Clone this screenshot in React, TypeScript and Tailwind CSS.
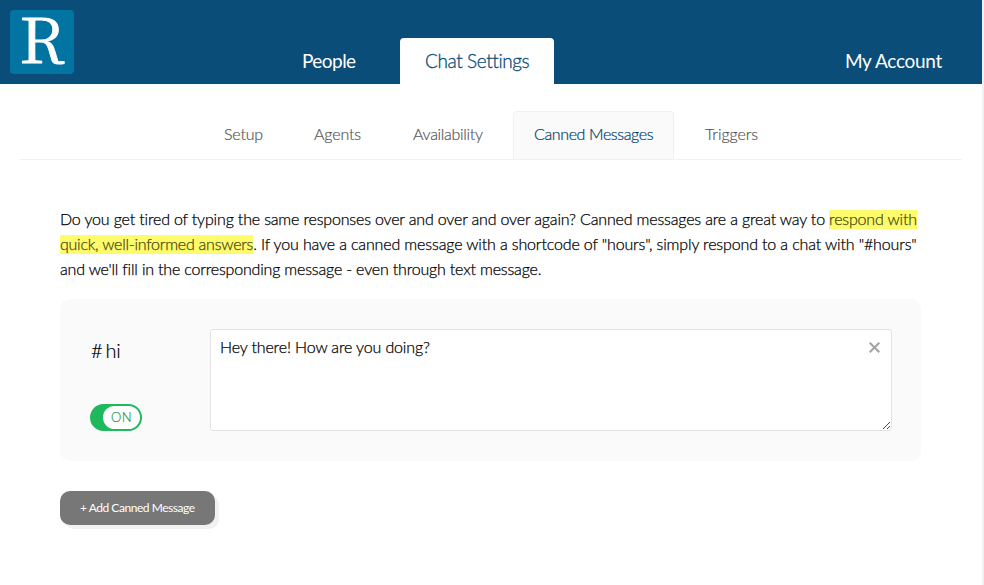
import type { ReactNode } from "react";

function TopNav() {
  return (
    <header className="flex h-[84px] items-start bg-[#0a4d78] text-[19px] leading-[46px] text-white">
      <div className="mt-[10px] ml-[10px] flex h-16 w-16 justify-center rounded bg-[#0274a2]">
        <span className="block origin-center scale-x-[1.04] font-['Noto_Serif_CJK_SC'] text-[62px] leading-[54px] font-normal [-webkit-text-stroke:0.9px_white]">
          R
        </span>
      </div>
      <nav className="mt-[38px] ml-[228px] flex">
        <a className="w-[98px] tracking-[-0.55px]">People</a>
        <a className="h-[46px] w-[154px] rounded-t bg-white pl-[25px] font-light tracking-[-0.4px] text-[#0a4d78] [-webkit-text-stroke:0.3px_#0a4d78]">
          Chat Settings
        </a>
      </nav>
      <a className="mt-[38px] mr-[40px] ml-auto tracking-[-0.3px]">My Account</a>
    </header>
  );
}

function SubNav() {
  return (
    <nav className="mx-5 mt-[27px] flex h-[49px] border-b border-[#f1f1f1] pl-[204px] text-[16px] leading-[46px] font-light text-[#555] [-webkit-text-stroke:0.2px]">
      <a className="w-[90px] tracking-[-0.2px]">Setup</a>
      <a className="w-[99px] tracking-[-0.15px]">Agents</a>
      <a className="w-[100px] tracking-[-0.3px]">Availability</a>
      <a className="h-12 w-[161px] rounded-t border border-b-0 border-[#f1f1f1] bg-[#fafafa] pl-5 leading-[44px] tracking-[-0.38px] text-[#003a68]">
        Canned Messages
      </a>
      <a className="ml-[31px] tracking-[-0.05px]">Triggers</a>
    </nav>
  );
}

function Mark({ children }: { children: ReactNode }) {
  return <mark className="inline-block bg-[#fffc6b] pb-[2px] leading-[17px] text-[#4a4816]">{children}</mark>;
}

function Intro() {
  return (
    <div className="mt-[46px] text-[16px] leading-[25px] font-light whitespace-nowrap text-black [-webkit-text-stroke:0.25px]">
      <p className="h-[25px]">
        <span className="tracking-[-0.165px]">
          Do you get tired of typing the same responses over and over and over again? Canned messages are a great way
          to{" "}
        </span>
        <span className="tracking-[-0.175px]">
          <Mark>respond with</Mark>
        </span>
      </p>
      <p className="h-[25px]">
        <span className="tracking-[-0.24px]">
          <Mark>quick, well-informed answers</Mark>
        </span>
        <span className="tracking-[-0.14px]">
          . If you have a canned message with a shortcode of "hours", simply respond to a chat with "#hours"
        </span>
      </p>
      <p className="h-[25px] tracking-[-0.18px]">
        and we'll fill in the corresponding message - even through text message.
      </p>
    </div>
  );
}

function CannedMessage() {
  return (
    <section className="mt-[18px] flex h-[162px] w-[861px] rounded-[10px] bg-[#fafafa] pt-[30px] pl-[30px]">
      <div className="w-[120px]">
        <div className="flex gap-[3px] pt-[8px] pl-px text-[20px] leading-[26px] font-light text-black [-webkit-text-stroke:0.2px]">
          <span>#</span>
          <span className="tracking-[-0.3px]">hi</span>
        </div>
        <div className="mt-[41px] flex h-[27px] w-[52px] justify-end rounded-full bg-[#1fb85c] p-[2px]">
          <span className="h-[23px] w-[37px] rounded-full bg-white pl-[8px] text-[13px] leading-[23px] font-light tracking-[0.4px] text-[#2b9a4f] [-webkit-text-stroke:0.2px]">
            ON
          </span>
        </div>
      </div>
      <div className="flex h-[102px] w-[682px] justify-between rounded-[3px] border border-[#e3e3e3] bg-white">
        <p className="pt-[5px] pl-[9px] text-[16px] leading-6 font-light tracking-[-0.14px] text-black [-webkit-text-stroke:0.25px]">
          Hey there! How are you doing?
        </p>
        <div className="flex flex-col items-end justify-between">
          <svg className="mt-[12px] mr-[11px]" width="11" height="11" viewBox="0 0 11 11">
            <path d="M0.7 0.7L10.3 10.3M10.3 0.7L0.7 10.3" stroke="#a3a3a3" strokeWidth="2" />
          </svg>
          <svg className="mr-px mb-px" width="7" height="7" viewBox="0 0 7 7">
            <path d="M0 7L7 0M4 7L7 4" stroke="#444" strokeWidth="1" />
          </svg>
        </div>
      </div>
    </section>
  );
}

export default function App() {
  return (
    <div className="h-[585px] overflow-hidden border-r-2 border-[#f1f1f1] bg-white font-['Lato',sans-serif]">
      <TopNav />
      <SubNav />
      <main className="pl-[60px]">
        <Intro />
        <CannedMessage />
        <button className="mt-[30px] block h-[34px] w-[155px] rounded-[10px] bg-[#777] pl-5 text-left text-[12px] tracking-[-0.46px] text-white shadow-[4px_4px_0_#f1f1f1]">
          + Add Canned Message
        </button>
      </main>
    </div>
  );
}
